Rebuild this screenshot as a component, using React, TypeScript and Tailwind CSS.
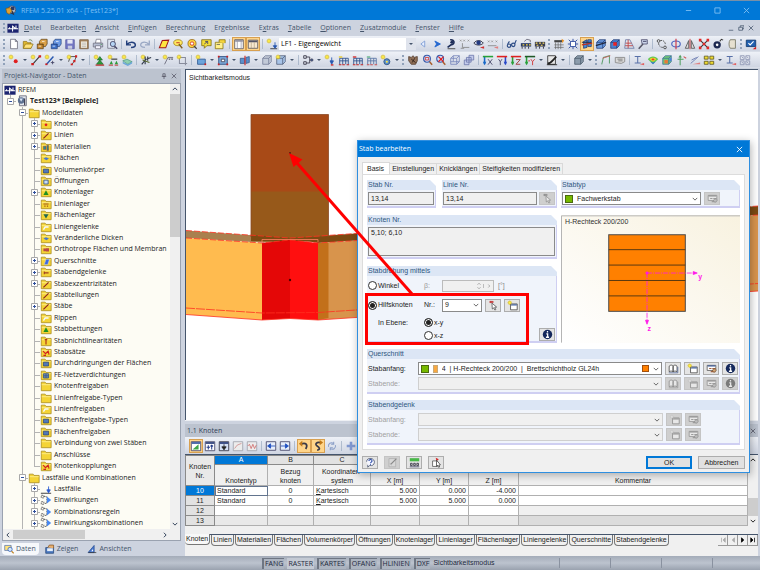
import { useState, type ReactNode } from "react";
import clsx from "clsx";

/* ---------- Icons, all on a 14 x 14 grid ---------- */

const spark = (
  <g>
    <path d="M3.5 0.5v6M0.5 3.5h6M1.5 1.5l4 4M5.5 1.5l-4 4" stroke="#e8c820" strokeWidth="0.8" />
    <circle cx="3.5" cy="3.5" r="1.8" fill="#fff04a" stroke="#b89a10" strokeWidth="0.4" />
  </g>
);

const cube = (fill: string, dark: string) => (
  <g stroke={dark} strokeWidth="0.8">
    <path d="M2 5l3-3h7v7l-3 3H2z" fill={fill} />
    <path d="M2 5h7v7M9 5l3-3" fill="none" />
  </g>
);

const beamFrame = (fill: string) => (
  <g fill="none" stroke="#2c4f8c" strokeWidth="1">
    <path d="M2 12V5h10v7M5.5 5v7M9 5v7M2 8h10" />
    <path d="M1 3.5h4" stroke={fill} strokeWidth="1.5" />
    <path d="M1 12.5h3M5 12.5h3M10 12.5h3" stroke="#c02020" strokeWidth="1.2" />
  </g>
);

const axis = (a: string, b: string, rotate: boolean) => (
  <g fill="none" strokeWidth="1.8">
    <path d={rotate ? "M11 12V3" : "M3 12V3"} stroke={a} />
    <path d="M1 3h12" stroke={b} />
    <path d={rotate ? "M9 9l2 4 2-4" : "M1 9l2 4 2-4"} fill={a} stroke="none" />
  </g>
);

const icons: Record<string, ReactNode> = {
  new: <path d="M3 1.5h5.5L11 4v8.5H3zM8.5 1.5V4H11" fill="#fff" stroke="#667" strokeWidth="0.9" />,
  open: (
    <g stroke="#8a6c10" strokeWidth="0.8">
      <path d="M1.5 12V4h4l1 1.5h4V12z" fill="#e0b830" />
      <path d="M1.5 12l2.5-5h9l-2.5 5z" fill="#ffe27a" />
      <path d="M8 2.5c2-1 3.5 0 4 1.5" fill="none" stroke="#3a6a3a" />
    </g>
  ),
  blockBrown: (
    <g stroke="#5a3a10" strokeWidth="0.8">
      <path d="M1.5 7h7v5.5h-7z" fill="#c88a30" />
      <path d="M4 4l2-2.5h7V7l-2 3H8.5V7H4z" fill="#dba24a" />
      <path d="M3 9.5h3M7 4h3" stroke="#fff" />
    </g>
  ),
  blockBlue: (
    <g stroke="#1c3a78" strokeWidth="0.8">
      <path d="M1.5 7h7v5.5h-7z" fill="#3f74cc" />
      <path d="M4 4l2-2.5h7V7l-2 3H8.5V7H4z" fill="#6c9ae4" />
      <path d="M3 9.5h3M7 4h3" stroke="#fff" />
    </g>
  ),
  save: (
    <g>
      <path d="M2 2h10v10.5H2z" fill="#7478c4" stroke="#50549c" strokeWidth="0.8" />
      <path d="M4 2h6v4.5H4z" fill="#e4e6f4" />
      <path d="M4.5 9h5v3.5h-5z" fill="#c8cce0" />
    </g>
  ),
  paste: (
    <g>
      <path d="M2 2h10v10.5H2z" fill="#a88660" stroke="#6e5436" strokeWidth="0.8" />
      <path d="M3.5 4h7v7.5h-7z" fill="#eee8dc" />
      <path d="M4.5 6h5M4.5 8h5M4.5 10h5" stroke="#a0a0a0" strokeWidth="0.6" />
    </g>
  ),
  print: (
    <g stroke="#667" strokeWidth="0.8">
      <path d="M4 6l1-4.5h5L10.5 6z" fill="#fff" />
      <path d="M1.5 6h11v4.5h-11z" fill="#b8c0d4" />
      <path d="M4 9h6v3.5H4z" fill="#f4f4ff" />
      <path d="M10 7.5h1.5" stroke="#2a8a2a" />
    </g>
  ),
  preview: (
    <g>
      <path d="M2 1.5h8V12H2z" fill="#dfe6f2" stroke="#667" strokeWidth="0.8" />
      <circle cx="8" cy="7" r="3" fill="#b4d4f4" stroke="#446" />
      <path d="M10 9.5l3 3" stroke="#446" strokeWidth="1.6" />
    </g>
  ),
  undo: (
    <path d="M2 3v5h5M2.5 7.5C5 4 11 4 12 7.5c.5 2-1 3.5-5 3.5" fill="none" stroke="#24407c" strokeWidth="1.7" />
  ),
  redo: (
    <path d="M12 3v5H7M11.5 7.5C9 4 3 4 2 7.5c-.5 2 1 3.5 5 3.5" fill="none" stroke="#9aa8c4" strokeWidth="1.5" />
  ),
  plane: <path d="M1.5 11.5L5 3l7.5-.5L9 11.5z" fill="#ffe640" stroke="#a01818" strokeWidth="1.2" />,
  lens: (
    <g>
      <ellipse cx="7" cy="5.5" rx="5" ry="3.5" fill="#ffe860" stroke="#a08010" strokeWidth="0.9" />
      <path d="M8 7l4 5" stroke="#806020" strokeWidth="1.6" />
      <path d="M5 5.5h4" stroke="#c02020" />
    </g>
  ),
  target: (
    <g>
      <circle cx="7" cy="6.5" r="4.7" fill="#ffd840" stroke="#906010" strokeWidth="0.9" />
      <circle cx="7" cy="6.5" r="2" fill="#fff" stroke="#d03020" />
      <path d="M9 9l3.5 3.5" stroke="#444" strokeWidth="1.4" />
    </g>
  ),
  note: (
    <g>
      <path d="M2 2h11v7H8l-3 3V9H2z" fill="#f2dc38" stroke="#7a6a10" strokeWidth="0.9" />
      <path d="M5 7l4-3M6 4h3v3" fill="none" stroke="#446" />
    </g>
  ),
  folderWin: (
    <g stroke="#86700c" strokeWidth="0.9">
      <path d="M1.5 12.5V5h9v7.5z" fill="#fff08a" />
      <path d="M6 5V2h7v4" fill="#f5d53c" />
      <path d="M3 7.5h4" stroke="#555" />
    </g>
  ),
  tableA: (
    <g>
      <path d="M2 2h10v10.5H2z" fill="#fff" stroke="#4a4a5a" strokeWidth="0.9" />
      <path d="M2.5 2.5h9v1.8h-9z" fill="#889" />
      <path d="M5 4v8M9.5 4v8" stroke="#778" strokeWidth="0.7" />
    </g>
  ),
  tableB: (
    <g>
      <path d="M1.5 2.5h11V12h-11z" fill="#f7e8d0" stroke="#4a4a5a" strokeWidth="0.9" />
      <path d="M2 3h10v2H2z" fill="#556" />
      <path d="M5 5v7M8.5 5v7" stroke="#a97" strokeWidth="0.7" />
    </g>
  ),
  loadcase: (
    <g>
      {spark}
      <path d="M5 12.5h8" stroke="#333" />
      <path d="M10.5 5v5M8.5 9l2 3 2-3z" stroke="#2858b0" fill="#2858b0" />
    </g>
  ),
  prev: <path d="M9 3.5L4.500 7 9 10.5z" fill="#e8f0ff" stroke="#7c9cd4" />,
  next: <path d="M4.500 3.5L11 7l-6.500 3.500L6.500 7z" fill="#2468d0" stroke="#2468d0" />,
  eyeSupport: (
    <g>
      <path d="M6 2a4 3 0 1 1 1 6l-4 3" fill="none" stroke="#1c2c58" strokeWidth="1.8" />
      <circle cx="8" cy="5" r="1.8" fill="#1c2c58" />
      <path d="M3 12.5h9" stroke="#555" strokeWidth="1.2" />
    </g>
  ),
  values: (
    <g stroke="#888" fill="none">
      <path d="M1 2l2 2M3 2L1 4M5 2l2 2M7 2L5 4M10 2l2 2M12 2l-2 2" strokeWidth="0.8" />
      <path d="M4 6v5h8M2 12h4" />
    </g>
  ),
  eye: (
    <g>
      <path d="M1 6c3-4 8-4 11 0-3 3-8 3-11 0z" fill="#dfe6f4" stroke="#223" />
      <circle cx="6.5" cy="5.5" r="2.6" fill="#233a80" />
      <path d="M8 11l5-1.500v3z" fill="#d03030" />
    </g>
  ),
  valuesRed: (
    <g stroke="#888" fill="none">
      <path d="M1 3l2 2M3 3L1 5M5 3l2 2M7 3L5 5M10 3l2 2M12 3l-2 2" strokeWidth="0.8" />
      <path d="M1 9h10" />
      <path d="M8 11l5-1.500v3z" fill="#e08080" stroke="none" />
    </g>
  ),
  glasses: (
    <g fill="none" stroke="#2a4a84" strokeWidth="1.3">
      <circle cx="3.5" cy="9" r="2" />
      <circle cx="8.5" cy="8" r="2" />
      <path d="M5 8.5l1.5-.5M10 7l2-4.5M2 7l2-3" />
    </g>
  ),
  beamA: (
    <g>
      <path d="M1 6h12v4H1z" fill="#2a3c68" />
      <path d="M2.5 10v2.5M6 10v2.5M10 10v2.5" stroke="#223" />
      <path d="M3 8h2M7 8h2M10.5 8h2" stroke="#ffd840" strokeWidth="1.4" />
      <path d="M5 4l3-2.5 4 1V5" fill="none" stroke="#667" />
    </g>
  ),
  beamB: (
    <g>
      <path d="M1 4.5h12V10H1z" fill="#3a3e50" />
      <path d="M2.5 10v2.5M6.5 10v2.5M11 10v2.5" stroke="#223" />
      <path d="M2 6h2M6 6h2M10 6h2M3 8.5h2M8 8.5h2" stroke="#ffe060" strokeWidth="1.3" />
    </g>
  ),
  grid: (
    <g>
      <path d="M1.5 2.5h9V5h-9z" fill="#444" />
      <path d="M3 5v8M6 5v8M9 5v8M1.5 8h11M1.5 11h11" stroke="#666" strokeWidth="0.8" />
      <path d="M10 1l3 2-2 3z" fill="#e89020" />
    </g>
  ),
  snap: (
    <g fill="none" stroke="#3450a0" strokeWidth="1.1">
      <path d="M4 4h6v6H4z" fill="#fff" />
      <path d="M7 1v3M7 10v3M1 7h3M10 7h3M2 2l2 2M12 2l-2 2M2 12l2-2M12 12l-2-2" />
    </g>
  ),
  render: (
    <g>
      <path d="M3 4l4-2v9l-4 1zM8 2h4v8H8z" fill="#4888d8" stroke="#16306c" strokeWidth="0.8" />
      <path d="M1 8l12-2" stroke="#c03020" strokeWidth="1.3" />
      <path d="M1 5h11" stroke="#223" />
    </g>
  ),
  cubesBlue: (
    <g>
      {cube("#6c9ce0", "#16306c")}
      <path d="M1 9L13 5" stroke="#202840" strokeWidth="1.5" />
    </g>
  ),
  cubesRed: (
    <g>
      {cube("#4c80d0", "#16306c")}
      <path d="M5 5h4v4H5z" fill="#f02020" />
    </g>
  ),
  redGrid: (
    <g fill="none">
      <path d="M3 2h5l5 10H2z" stroke="#7080a8" />
      <path d="M3 6h7M2.5 9h9M6 2v10" stroke="#c04040" />
    </g>
  ),
  wrench: (
    <g>
      <path d="M5 2h7v5H6z" fill="#ccd6ea" stroke="#446" strokeWidth="0.9" />
      <path d="M2 12.5L7 7" stroke="#556" strokeWidth="1.8" />
      <path d="M7 4h4" stroke="#446" />
    </g>
  ),
  move: (
    <g fill="none" stroke="#444">
      <circle cx="3" cy="3.5" r="1.6" />
      <circle cx="10.5" cy="11" r="1.6" />
      <path d="M5 3c4-1 6 2 6 5M3 6c0 3 2 5 5 5" strokeDasharray="2 1" />
    </g>
  ),
  rotate: (
    <g fill="none" strokeWidth="1.3">
      <ellipse cx="7" cy="7" rx="5" ry="3.5" stroke="#4a64c0" />
      <path d="M7 1v12" stroke="#d03040" />
    </g>
  ),
  mirror: (
    <g fill="none" stroke="#555">
      <path d="M5.5 3v9h-4zM8.5 3v9h4z" fill="#ddd" />
      <path d="M7 1v12" stroke="#c03030" />
    </g>
  ),
  cross: (
    <g>
      <path d="M3 3l8 8M11 3l-8 8" stroke="#303030" strokeWidth="1.2" />
      <path d="M1 1h3v3H1zM10 1h3v3h-3zM1 10h3v3H1zM10 10h3v3h-3zM5.500 5.500h3v3h-3z" fill="#e02828" />
    </g>
  ),
  bomb: (
    <g>
      <circle cx="6" cy="8" r="4.3" fill="#1c2850" />
      <circle cx="6" cy="8" r="1.5" fill="#fff" />
      <path d="M9 4l2-2.5 2 1" fill="none" stroke="#333" strokeWidth="1.2" />
    </g>
  ),
  clipStub: <path d="M5 2h6v10H5c-2-2-2-8 0-10z" fill="#e6e0d0" stroke="#776" />,
  monitor: (
    <g>
      <path d="M1.5 2.5h11V10h-11z" fill="#2060b0" stroke="#123a70" />
      <path d="M4 6l2 2 4-4" fill="none" stroke="#fff" strokeWidth="1.3" />
      <path d="M9 13l4-3v3z" fill="#d02020" />
    </g>
  ),
  node: (
    <g>
      {spark}
      <circle cx="9" cy="8.5" r="2.3" fill="#e02020" />
    </g>
  ),
  line: (
    <g>
      {spark}
      <path d="M3 12l8-9" stroke="#333" strokeWidth="1.2" />
      <path d="M1.5 10.5h3V13h-3zM10 1.5h3V4h-3z" fill="#d02020" />
    </g>
  ),
  member: (
    <g>
      {spark}
      <path d="M3 12l8-9" stroke="#2858b0" strokeWidth="1.6" />
      <path d="M10 8v4M8 10h4" stroke="#446" />
      <path d="M1.5 11H4v2H1.500z" fill="#d02020" />
    </g>
  ),
  poly: (
    <g>
      <path d="M3 9l2-6h7l-2 5-3 4" fill="none" stroke="#444" />
      {spark}
      <path d="M10.5 1.5H13V4h-2.500zM8.5 7H11v2.500H8.500zM5.5 11H8v2H5.500z" fill="#d02020" />
    </g>
  ),
  support: (
    <g>
      {spark}
      <path d="M8 3l3 4H5zM8 7l4 5H4z" fill="#2c9c3c" stroke="#166020" strokeWidth="0.7" />
      <path d="M3 13h10" stroke="#c02020" strokeWidth="1.3" />
    </g>
  ),
  supportLine: (
    <g>
      {spark}
      <path d="M5 6h7" stroke="#333" strokeWidth="1.3" />
      <path d="M3 12l2-4 2 4zM9 12l2-4 2 4z" fill="#2c9c3c" />
      <path d="M2 13h5M9 13h4" stroke="#c02020" />
    </g>
  ),
  supportArea: (
    <g>
      {spark}
      <path d="M2 8l5-2 6 3-5 3z" fill="#8ed0b0" stroke="#3c8c70" strokeWidth="0.7" />
      <path d="M2 9v2l6 3 5-3V9l-5 3z" fill="#6ca8d8" />
    </g>
  ),
  memberEdit: (
    <g>
      {spark}
      <path d="M2 12l5-6 6-2M6 3v9M9 3v5" fill="none" stroke="#303848" strokeWidth="1.3" />
      <path d="M3 7l8 3" stroke="#5a6a30" strokeWidth="1.3" />
    </g>
  ),
  dim: (
    <g>
      {spark}
      <path d="M3 12l4-8h6" fill="none" stroke="#667" />
      <path d="M8 5l1.5 2M9.5 5L8 7M11 5l1.5 2M12.5 5L11 7" stroke="#556" strokeWidth="0.8" />
    </g>
  ),
  crop: (
    <g>
      <path d="M4 2v9h9M2 4h9v9" fill="none" stroke="#888c9c" strokeWidth="1.2" />
      {spark}
    </g>
  ),
  surface: (
    <g>
      <path d="M3 6h9v6H3z" fill="#6ca4dc" stroke="#345c94" />
      {spark}
      <path d="M11 11h2v2h-2z" fill="#d02020" />
    </g>
  ),
  opening: (
    <g>
      <path d="M2 3h10v9H2z" fill="#7ca8d8" stroke="#2c4f80" />
      <path d="M5 6h4v3H5z" fill="#fff" stroke="#445" />
      <path d="M1 2h2v2H1zM11 2h2v2h-2zM1 11h2v2H1zM11 11h2v2h-2z" fill="#d02020" />
    </g>
  ),
  intersect: (
    <g>
      <path d="M1.5 5h5v6h-5zM8 4l4-1v7l-4 1z" fill="#5c90cc" stroke="#2c4f80" strokeWidth="0.8" />
      <path d="M7 2v11" stroke="#d03030" strokeWidth="1.4" />
    </g>
  ),
  solid: cube("#c2cad8", "#66708c"),
  solidNew: (
    <g>
      {cube("#a8c4e8", "#44506c")}
      {spark}
    </g>
  ),
  connect: (
    <g fill="none" stroke="#445" strokeWidth="1.1">
      <path d="M2 2h3v3H2zM2 9h3v3H2zM5 3.5h4v7H5M9 7h2" />
      <circle cx="11.5" cy="7" r="1.3" fill="#3060c0" />
    </g>
  ),
  loadNode: (
    <g>
      {spark}
      <path d="M9 4v4M7 8l2 4 2-4z" fill="#2858b0" stroke="#2858b0" />
      <path d="M8 12h3v1.500H8z" fill="#d02020" />
    </g>
  ),
  frameA: beamFrame("#e8c820"),
  frameB: beamFrame("#d02020"),
  frameD: <g opacity="0.75">{beamFrame("#30a060")}</g>,
  sparkGear: (
    <g>
      {spark}
      <circle cx="8" cy="9" r="3.5" fill="#5c90cc" stroke="#2c4f80" />
      <circle cx="8" cy="9" r="1.2" fill="#ffe640" />
    </g>
  ),
  hand: (
    <g>
      <path d="M2 3l3 1 2-2 1 2 4-1v5l-2 4H5L2 8z" fill="#907058" stroke="#503828" strokeWidth="0.9" />
      <path d="M5 6l5 4M9 5l-3 5" stroke="#302018" />
    </g>
  ),
  zoomWin: (
    <g fill="none">
      <circle cx="7" cy="5.5" r="4" fill="#cfe0fa" stroke="#3858a8" strokeWidth="1.2" />
      <path d="M10 9l3 3.5" stroke="#a86030" strokeWidth="1.8" />
      <path d="M5 4h4v3H5z" stroke="#d03030" />
    </g>
  ),
  zoomAll: (
    <g fill="none">
      <circle cx="6" cy="5.5" r="4" fill="#cfe0fa" stroke="#3858a8" strokeWidth="1.2" />
      <path d="M9 9l3 3.5" stroke="#a86030" strokeWidth="1.8" />
      <path d="M4 3l6 6M10 3L4 9" stroke="#e02020" strokeWidth="1.4" />
    </g>
  ),
  wire: <path d="M2 5l3-3h7v7l-3 3H2zM2 5h7v7M9 5l3-3M5 2v7H2M5 9h7" stroke="#7080b8" strokeWidth="0.9" />,
  boxes: (
    <g fill="#c4ccec" stroke="#6874a8" strokeWidth="0.9">
      <path d="M7 1.5h5.500V7H7zM4 4h5.500v5.500H4zM1.5 7H7v5.500H1.500z" />
    </g>
  ),
  axX: (
    <g>
      {axis("#1868c8", "#28a038", false)}
      <path d="M7 6l5 6.5M12 6l-5 6.5" stroke="#446" />
    </g>
  ),
  axYneg: (
    <g>
      {axis("#2848c8", "#e02020", true)}
      <path d="M3 6l2 3 2-3M5 9v4" stroke="#446" fill="none" />
    </g>
  ),
  axZ: (
    <g>
      {axis("#28a038", "#e02020", false)}
      <path d="M7 6.5h5L7 12h5" stroke="#a03030" fill="none" />
    </g>
  ),
  axYpos: (
    <g>
      {axis("#28a038", "#205828", false)}
      <path d="M5 8h2M8 6l2 3 2.5-3M10 9v4" stroke="#d03030" fill="none" />
    </g>
  ),
  pencil: (
    <g>
      <path d="M2 2h9v10H2z" fill="#e8e8e8" stroke="#333" />
      <path d="M2 11c4 0 5-3 10-8" fill="none" stroke="#222" strokeWidth="2" />
      <path d="M1 12.5h12" stroke="#222" />
    </g>
  ),
  solidDark: cube("#8c9cac", "#3c4c5c"),
  arch: (
    <g fill="none">
      <path d="M2 12l2-8 7-2v9" stroke="#60a070" strokeWidth="1.2" />
      <path d="M3 5l9-3" stroke="#d06060" />
    </g>
  ),
  sheet: (
    <g>
      <path d="M1.5 4h11v5l-4 2-7-1z" fill="#d8d8d8" stroke="#888" />
      <path d="M4 6h6M5 8h5" stroke="#777" />
    </g>
  ),
  deform: (
    <g fill="none">
      <path d="M2 3h7M5.5 3v7M2 10.5h7" stroke="#5870a8" strokeWidth="1.2" />
      <path d="M8 12l5-1.5V13z" fill="#e06060" />
    </g>
  ),
  rainbow: (
    <g>
      <path d="M1 6c3-4 9-4 12 0l-6 6z" fill="#60c850" />
      <path d="M3 6c2-2 6-2 8 0L7 9z" fill="#f0d030" />
      <path d="M5 6c1-1 3-1 4 0L7 8z" fill="#e84020" />
      <path d="M4 9l3 3 3-3-3 1z" fill="#3870e0" />
    </g>
  ),
  fem: (
    <g>
      {cube("#70c878", "#386898")}
      <path d="M4 7h4v4H4z" fill="#e87838" />
      <path d="M10 5l2-1v4l-2 1z" fill="#4880e0" />
    </g>
  ),
  forceUp: (
    <g fill="none" strokeWidth="1.2">
      <path d="M6 13V3M3 6h7" stroke="#50a060" />
      <path d="M10 3l3 2" stroke="#d05050" />
      <path d="M4 4l2-3 2 3z" fill="#50a060" />
    </g>
  ),
  slope: (
    <g fill="none">
      <path d="M2 11l9-8M3 7l6-3" stroke="#6878b0" />
      <path d="M4 12l9-2v2z" fill="#e08080" />
    </g>
  ),
  tiles: (
    <g fill="#f0dc30" stroke="#55501c" strokeWidth="0.9">
      <path d="M1.5 2.5H6V6H1.500zM8 2.5h4.500V6H8zM1.5 8.5H6V12H1.500zM8 8.5h4.500V12H8z" />
    </g>
  ),
  sums: (
    <g fill="none" stroke="#8890b0" strokeWidth="0.9">
      <path d="M1.5 2H6v4.500H1.500zM8 2h4.500v4.500H8zM1.5 8H6v4.500H1.500zM8 8h4.500v4.500H8z" />
      <path d="M3 3l2 2M9 3l2 2M3 9l2 2M9 9l2 2" />
    </g>
  ),
  tblEdit: (
    <g>
      <path d="M1.5 2h11v10.5h-11z" fill="#fff" stroke="#446" />
      <path d="M2 2.5h10v2H2z" fill="#3858a0" />
      <path d="M3 11l7-6v6z" fill="#40a848" />
    </g>
  ),
  tblGo: (
    <g>
      <path d="M1.5 2h11v10.5h-11z" fill="#fff" stroke="#446" />
      <path d="M2 2.5h10v2H2z" fill="#283c78" />
      <path d="M5 6v5M3 8.500h4M9 11V6M7.5 7.500L9 6l1.500 1.500" stroke="#223a88" strokeWidth="1.2" fill="none" />
    </g>
  ),
  tblDown: (
    <g>
      <path d="M1.5 2h11v10.5h-11z" fill="#d4e0f4" stroke="#334" />
      <path d="M2 2.5h10v2H2z" fill="#283c78" />
      <path d="M7 5v3M4.5 8h5L7 11.500z" fill="#222" stroke="#222" />
    </g>
  ),
  chartA: (
    <g fill="none" stroke="#a0a4ac">
      <path d="M1.5 2h11v10.5h-11z" fill="#ececec" />
      <path d="M3 10l3-4 5-2" stroke="#d09090" />
    </g>
  ),
  chartB: (
    <g fill="none" stroke="#a0a4ac">
      <path d="M1.5 2h11v10.5h-11z" fill="#ececec" />
      <path d="M2 7l2-2 2 5 2-5 2 5 2-4" stroke="#d07070" />
    </g>
  ),
  insLeft: (
    <g>
      <path d="M1.5 2h11v10h-11z" fill="#e8eefa" stroke="#446" />
      <path d="M12 7H6M6.5 4.500L3 7l3.500 2.500z" fill="#2050c0" stroke="#2050c0" />
    </g>
  ),
  insRight: (
    <g>
      <path d="M1.5 2h11v10h-11z" fill="#e8eefa" stroke="#446" />
      <path d="M2 7h6M7.5 4.500L11 7 7.500 9.500z" fill="#2050c0" stroke="#2050c0" />
    </g>
  ),
  hookA: (
    <g>
      <path d="M4 4.500c5-2 8 1 5 6" fill="none" stroke="#3a3a48" strokeWidth="2" />
      <path d="M5 1v7L1 4.500z" fill="#c07818" />
    </g>
  ),
  hookB: (
    <g>
      <path d="M10 3C5 2 3 5 6 7s4 4 0 5" fill="none" stroke="#3a3a48" strokeWidth="2" />
      <path d="M9 0v6l4-3z" fill="#c07818" />
    </g>
  ),
  sync: <path d="M3 8c-1-4 3-6 6-4M11 6c1 4-3 6-6 4M9 2v3H6M5 12V9h3" fill="none" stroke="#8ca0c8" strokeWidth="1.2" />,
  plus: <path d="M7 2v10M2 7h10" stroke="#8098d0" strokeWidth="3" />,
  logo: (
    <g>
      <path d="M0.5 2h13v10.500H0.500z" fill="#1c2470" />
      <path d="M1 8h12M3 8V6M6.5 11V4M6.5 5l4 3M10.5 8V4" stroke="#fff" strokeWidth="1.2" fill="none" />
    </g>
  ),
  appLogo: (
    <g>
      <circle cx="8" cy="5.5" r="4.5" fill="#b8c4d4" stroke="#38486c" />
      <path d="M7 2h4v4H7z" fill="#283868" />
      <path d="M1 4l5-1 2 4-3 4-3-2z" fill="#e0a030" stroke="#705010" strokeWidth="0.7" />
      <path d="M9 6l2 6-4-2z" fill="#2c3448" />
    </g>
  ),
  docIcon: (
    <g>
      <path d="M4 1h8v11.500H4z" fill="#e4e8ee" stroke="#667" />
      <circle cx="6" cy="6.5" r="3.8" fill="#5c7090" />
      <path d="M4 4h4L6 8z" fill="#d8e4f4" />
      <path d="M10 4v8" stroke="#445" strokeWidth="1.4" />
    </g>
  ),
  load: (
    <g>
      <path d="M1 12h12" stroke="#555" strokeWidth="1.3" />
      <path d="M10 4v5M8 8l2 3.500L12 8z" fill="#2858d0" stroke="#2858d0" />
    </g>
  ),
  combi: (
    <g fill="none" stroke="#555">
      <path d="M1.5 1.500h3v3h-3zM1.5 9h3v3h-3zM4.5 3H8v8H4.500" strokeDasharray="2 1" />
      <path d="M8 3l5 4-5 4z" fill="#4888f0" stroke="none" />
    </g>
  ),
  tabData: (
    <g>
      <path d="M1 2h9v7H1z" fill="#ffe27a" stroke="#5070b0" />
      <circle cx="8.5" cy="7.5" r="3" fill="#d4e8ff" stroke="#2858b0" />
      <path d="M10.5 10l3 3" stroke="#c08020" strokeWidth="1.6" />
    </g>
  ),
  tabShow: (
    <g>
      <path d="M1 5h11v8H1z" fill="#4a78c0" stroke="#284878" />
      <path d="M3 6h8v4H3z" fill="#e8f0fa" />
      <path d="M4 5l2-3.500h6V6" fill="#e8b070" stroke="#805020" />
    </g>
  ),
  tabViews: (
    <g>
      <path d="M1.5 12L10 2v10z" fill="#4878d0" stroke="#204890" />
      <path d="M2 12h11" stroke="#333" />
      <path d="M6 10l2.500-3v3z" fill="#fff" />
    </g>
  ),
  pick: (
    <g>
      <path d="M2 2.5h5" stroke="#c02828" strokeWidth="1.8" />
      <path d="M3 1v3M5 1v3" stroke="#c02828" strokeWidth="0.8" />
      <path d="M5 4l6 5-2.5.2 1.500 3-1.300.6L7.300 10 5.500 11.500z" fill="#fff" stroke="#444" strokeWidth="0.9" />
    </g>
  ),
  create: (
    <g>
      <path d="M4.5 5H13v7.500H4.500z" fill="#fff" stroke="#444" />
      <path d="M5 5.500h7.500V7H5z" fill="#3c5c9c" />
      {spark}
    </g>
  ),
  edit: (
    <g>
      <path d="M1.5 3h11v6.500h-11z" fill="#fff" stroke="#555" />
      <path d="M2 3h10v1.500H2z" fill="#3c5c9c" />
      <path d="M4 7h3M8 7h4M6 11h6" stroke="#a06040" strokeWidth="1.5" />
      <path d="M8 9l4-2 1 3-3 2z" fill="#d8a878" stroke="#604020" strokeWidth="0.7" />
    </g>
  ),
  book: (
    <g stroke="#333" strokeWidth="0.9">
      <path d="M1.5 11V4c2-2 4-1.500 5 0v7c-2-1-3-1-5 0zM6.5 4c1-1.500 3-2 5 0v7c-2-1-3-1-5 0z" fill="#fff" />
      <path d="M1 12.5h11.500V5" fill="none" stroke="#445a94" />
    </g>
  ),
  info: (
    <g>
      <circle cx="7" cy="7" r="6" fill="#14285c" />
      <path d="M7 2.500v2M5.5 6.200H7.200V10.500M5 10.500h4" stroke="#fff" strokeWidth="1.6" fill="none" />
    </g>
  ),
  help: (
    <g fill="none">
      <path d="M2 6a5 4.500 0 1 1 4 4.800L3.500 13V10" fill="#f4f6ff" stroke="#44506c" />
      <path d="M5 5c0-2.500 4-2.500 4 0 0 1.500-2 1.500-2 3M7 9v1" stroke="#2848a8" strokeWidth="1.3" />
    </g>
  ),
  comment: (
    <g>
      <path d="M2.5 2H11v10.500H2.500z" fill="#dde4dd" stroke="#8a928a" />
      <path d="M5 9l7-7" stroke="#444" strokeWidth="1.6" />
      <path d="M4 8l1.500 2.500" stroke="#5a8a5a" />
    </g>
  ),
  units: (
    <g>
      <path d="M1 1.500h12v4H1z" fill="#48b848" />
      <path d="M2 8h2v3H2zM6 8h2v3H6zM10 8h2v3h-2z" fill="none" stroke="#223" />
      <path d="M1 12.500h12" stroke="#446" />
    </g>
  ),
  select: (
    <g>
      <path d="M2 5h6v7H2z" fill="#fff" stroke="#555" />
      <path d="M6 1l4 2-3 2z" fill="#d02828" />
      <path d="M7 4l5 6-2 .2 1 2.500-1.500.3-1-2.500L7 12z" fill="#fff" stroke="#333" strokeWidth="0.9" />
    </g>
  ),
};

function Icon({ name, className = "size-3.5" }: { name: string; className?: string }) {
  return (
    <svg viewBox="0 0 14 14" className={clsx("shrink-0", className)} fill="none" aria-hidden="true">
      {icons[name]}
    </svg>
  );
}

const marks: Record<string, ReactNode> = {
  node: <circle cx="7" cy="8" r="1.6" fill="#e02020" />,
  line: <path d="M4 11l6-6" stroke="#8c2020" strokeWidth="1.3" />,
  mat: <path d="M4 6h3v4H4zM8 5h2v6H8z" fill="#2c8c8c" stroke="#a03030" strokeWidth="0.5" />,
  blue: <path d="M4 7.5L7 6l3.5 1.5-3 2z" fill="#4878d0" />,
  solid: <path d="M4 6h6v4.500H4z" fill="#5078b8" stroke="#2c4070" strokeWidth="0.8" />,
  hole: <path d="M4.5 6h5v4.500h-5z" fill="#c8dcf4" stroke="#38588c" />,
  green: <path d="M7 5l3 5.500H4z" fill="#209020" />,
  rail: <path d="M4 7h6M5 9.5h1.500M8 9.5h1.500" stroke="#a05818" strokeWidth="1.3" />,
  area: <path d="M4 6h6l-3 5z" fill="#206850" />,
  pale: <path d="M4 10l2-3h4" stroke="#f4f8ff" strokeWidth="1.6" fill="none" />,
  ortho: <path d="M4 6.500h3v3H4zM7 6h3.500v4H7z" fill="#b84848" />,
  section: <path d="M5 11l2-6h4l-2 6z" fill="#3c68e0" stroke="#c8d8ff" strokeWidth="0.5" />,
  hinge: <path d="M5 8h5M5 6.500v3" stroke="#a04020" strokeWidth="1.3" />,
  bar: <path d="M7 5v6M5.5 5.500h3" stroke="#b03818" strokeWidth="1.4" />,
  mesh: <path d="M4 5.500h6v5H4zM6 5.500v5M8 5.500v5M4 8h6" stroke="#30507c" strokeWidth="0.9" fill="#8ca8cc" />,
  chain: <path d="M3.5 6l3 3 3-3 1 4M4 11h3" stroke="#d02020" strokeWidth="1.3" fill="none" />,
};

function Folder({ mark }: { mark?: string }) {
  return (
    <svg viewBox="0 0 14 14" className="size-3 shrink-0" fill="none" aria-hidden="true">
      <path d="M1.5 12.500V2.500H6L7 4h6v8.500z" fill="#f4d436" stroke="#a88a1c" strokeWidth="0.9" />
      <path d="M2 5.500h10.500" stroke="#fff29a" strokeWidth="0.9" />
      {mark && marks[mark]}
    </svg>
  );
}

/* ---------- Menu and toolbars ---------- */

// [before, mnemonic, after]
const menu = [
  ["", "D", "atei"],
  ["Bearbeite", "n", ""],
  ["", "A", "nsicht"],
  ["", "E", "infügen"],
  ["Be", "r", "echnung"],
  ["Er", "g", "ebnisse"],
  ["E", "x", "tras"],
  ["", "T", "abelle"],
  ["", "O", "ptionen"],
  ["", "Z", "usatzmodule"],
  ["", "F", "enster"],
  ["", "H", "ilfe"],
];

// "|" separator, ":" grip, "v" drop-down arrow, leading "*" pressed
const barFileLeft =
  ": new open blockBrown blockBlue save paste print preview | undo redo | plane lens target note folderWin | *tableA *tableB | loadcase";
const barFileRight =
  "prev next eyeSupport values eye valuesRed | glasses beamA beamB : grid snap *render cubesBlue cubesRed redGrid wrench | move rotate mirror cross bomb clipStub : monitor";
const barModel =
  ": node v line member v poly v | support supportLine supportArea | memberEdit v dim crop | surface v opening v intersect v solid solidNew v | connect v loadNode frameA frameB frameD sparkGear v : hand zoomWin zoomAll wire boxes | axX axYneg axZ axYpos v pencil v | solidDark v : arch sheet | deform rainbow fem forceUp slope tiles v deform sums";
const barTable = "*tblEdit tblGo tblDown chartA chartB | insLeft insRight | *hookA *hookB sync | plus hookA sync";

function ToolItems({ items }: { items: string }) {
  return (
    <>
      {items.split(" ").map((item, i) => {
        if (item === "|") return <span key={i} className="mx-0.5 h-2.5 w-px shrink-0 bg-slate-400/60" />;
        if (item === ":")
          return <span key={i} className="mx-px h-2.5 w-[3px] shrink-0 border-l-2 border-dotted border-slate-400" />;
        if (item === "v")
          return (
            <button key={i} aria-label="Mehr" className="flex w-2 shrink-0 justify-center">
              <span className="border-x-2 border-t-2 border-x-transparent border-t-slate-600" />
            </button>
          );
        const pressed = item.startsWith("*");
        const name = pressed ? item.slice(1) : item;
        return (
          <button
            key={i}
            aria-label={name}
            className={clsx(
              "flex size-3.5 shrink-0 items-center justify-center",
              pressed && "bg-[#ffd58a] outline outline-[#d8a050] -outline-offset-1"
            )}
          >
            <Icon name={name} className="size-3" />
          </button>
        );
      })}
    </>
  );
}

const barClass =
  "flex h-4 shrink-0 items-center overflow-hidden bg-linear-to-b from-[#eef1f7] to-[#cfd5e2] pl-0.5 border-b border-[#d9dee8]";

/* ---------- Navigator ---------- */

type Node = { label: string; depth: number; box?: "+" | "-"; icon?: string; mark?: string; last?: boolean };

const leaf = (label: string, mark?: string, box?: "+"): Node => ({ label, depth: 2, mark, box });

const rows: Node[] = [
  { label: "RFEM", depth: -1, icon: "logo" },
  { label: "Test123* [Beispiele]", depth: 0, box: "-", icon: "docIcon", last: true },
  { label: "Modelldaten", depth: 1, box: "-" },
  leaf("Knoten", "node", "+"),
  leaf("Linien", "line", "+"),
  leaf("Materialien", "mat", "+"),
  leaf("Flächen", "blue"),
  leaf("Volumenkörper", "solid"),
  leaf("Öffnungen", "hole"),
  leaf("Knotenlager", "green", "+"),
  leaf("Linienlager", "rail"),
  leaf("Flächenlager", "area"),
  leaf("Liniengelenke", "pale"),
  leaf("Veränderliche Dicken", "blue"),
  leaf("Orthotrope Flächen und Membran", "ortho"),
  leaf("Querschnitte", "section", "+"),
  leaf("Stabendgelenke", "hinge", "+"),
  leaf("Stabexzentrizitäten", "line", "+"),
  leaf("Stabteilungen", "line"),
  leaf("Stäbe", "line", "+"),
  leaf("Rippen", "pale"),
  leaf("Stabbettungen", "green"),
  leaf("Stabnichtlinearitäten", "bar"),
  leaf("Stabsätze", "chain"),
  leaf("Durchdringungen der Flächen", "solid"),
  leaf("FE-Netzverdichtungen", "mesh"),
  leaf("Knotenfreigaben"),
  leaf("Linienfreigabe-Typen"),
  leaf("Linienfreigaben", "pale"),
  leaf("Flächenfreigabe-Typen", "solid"),
  leaf("Flächenfreigaben", "solid"),
  leaf("Verbindung von zwei Stäben"),
  leaf("Anschlüsse"),
  { label: "Knotenkopplungen", depth: 2, mark: "chain", last: true },
  { label: "Lastfälle und Kombinationen", depth: 1, box: "-" },
  { label: "Lastfälle", depth: 2, box: "+", icon: "load" },
  { label: "Einwirkungen", depth: 2, box: "+", icon: "combi" },
  { label: "Kombinationsregeln", depth: 2, box: "+", icon: "combi" },
  { label: "Einwirkungskombinationen", depth: 2, box: "+", icon: "combi" },
];

function TreeRow({ node }: { node: Node }) {
  return (
    <li className="flex min-h-0 flex-1 items-center whitespace-nowrap">
      {node.depth > 0 && <span className="w-3 shrink-0" />}
      {node.depth > 1 && (
        <span className="flex w-3 shrink-0 justify-center self-stretch">
          <span className="border-l border-[#b4b4b4]" />
        </span>
      )}
      {node.depth >= 0 && (
        <span className="relative flex w-3 shrink-0 items-center justify-center self-stretch">
          <span className={clsx("absolute left-1.5 top-0 border-l border-[#b4b4b4]", node.last ? "h-1/2" : "h-full")} />
          <span className="absolute left-1.5 right-0 top-1/2 border-t border-[#b4b4b4]" />
          {node.box && (
            <svg viewBox="0 0 7 7" className="relative size-[7px]" aria-hidden="true">
              <path d="M0.5 0.5h6v6h-6z" fill="#fff" stroke="#a8a8a8" />
              <path d={node.box === "+" ? "M2 3.5h3M3.5 2v3" : "M2 3.5h3"} stroke="#30509c" />
            </svg>
          )}
        </span>
      )}
      {node.icon ? <Icon name={node.icon} className="size-3" /> : <Folder mark={node.mark} />}
      <span className={clsx("pl-0.5", node.depth === 0 && "font-bold")}>{node.label}</span>
    </li>
  );
}

function Chevron({ className = "size-1.5" }: { className?: string }) {
  return (
    <svg viewBox="0 0 8 8" className={clsx("shrink-0", className)} fill="none" aria-hidden="true">
      <path d="M1 2.5l3 3 3-3" stroke="currentColor" strokeWidth="1.3" />
    </svg>
  );
}

function Navigator() {
  return (
    <aside className="flex w-[181px] shrink-0 flex-col pl-0.5">
      <header className="flex h-3.5 shrink-0 items-center bg-[#bcc3cf] px-0.5 text-slate-600">
        <h2 className="flex-1">Projekt-Navigator - Daten</h2>
        <button aria-label="Anheften" className="w-2.5">
          <svg viewBox="0 0 8 8" className="size-1.5" fill="none">
            <path d="M2.5 1h3v3.500h-3zM1 4.500h6M4 4.500V8" stroke="#556" />
          </svg>
        </button>
        <button aria-label="Schließen" className="w-2">
          <svg viewBox="0 0 8 8" className="size-1.5">
            <path d="M1 1l6 6M7 1L1 7" stroke="#556" />
          </svg>
        </button>
      </header>
      <div className="flex min-h-0 flex-1 flex-col border border-[#9aa2b0] bg-[#fdfcf4]">
        <div className="flex min-h-0 flex-1">
          <ul className="flex min-w-0 flex-1 flex-col overflow-hidden pl-px">
            {rows.map((node, i) => (
              <TreeRow key={i} node={node} />
            ))}
          </ul>
          <div className="flex w-2.5 shrink-0 flex-col items-center bg-[#f0f0f0] text-slate-700">
            <Chevron className="my-0.5 size-1.5 rotate-180" />
            <div className="h-[143px] w-full bg-[#cdcdcd]" />
            <Chevron className="mt-auto mb-0.5 size-1.5" />
          </div>
        </div>
        <div className="flex h-[11px] shrink-0 items-center bg-[#f0f0f0] pr-3 text-slate-700">
          <Chevron className="mx-0.5 size-1.5 rotate-90" />
          <div className="h-[9px] w-[72px] bg-[#cdcdcd]" />
          <Chevron className="ml-auto size-1.5 -rotate-90" />
        </div>
      </div>
      <div className="flex h-[15px] shrink-0 items-center text-slate-600">
        {[
          ["tabData", "Daten"],
          ["tabShow", "Zeigen"],
          ["tabViews", "Ansichten"],
        ].map(([icon, label], i) => (
          <button
            key={label}
            className={clsx("mr-1 flex h-3 items-center gap-0.5 pl-0.5 pr-[3px]", i === 0 && "rounded-b-sm bg-[#f6f8fb]")}
          >
            <Icon name={icon} className="size-2.5" />
            {label}
          </button>
        ))}
      </div>
    </aside>
  );
}

/* ---------- Model view ---------- */

function ModelView() {
  return (
    <div className="relative min-h-0 flex-1 overflow-hidden border-l border-t border-slate-600 bg-white">
      <svg viewBox="185 70 572 352" preserveAspectRatio="xMinYMin slice" className="size-full" fill="none">
        {/* left beam */}
        <path d="M185 230.500L289 238v4.500H261L185 238z" fill="#a9804f" />
        <path d="M185 238l76 5v77l-76-5.500z" fill="#ffbb4f" />
        {/* right beam */}
        <path d="M289 238l468-32v9l-440 28z" fill="#7c4a12" />
        <path d="M317 243l440-28v76l-440 29z" fill="#d8944c" />
        {/* column */}
        <path d="M250 114.500h77.500V192H250z" fill="#a84a17" />
        <path d="M250 191.500h77.500V237L289 240l-39-4z" fill="#97591a" />
        <path d="M250 235l39 3 38.500-2v5l-38.500 1-39-1z" fill="#7c4a12" />
        <path d="M317 243l10.500-.5V318L317 320z" fill="#c2701a" />
        <path d="M250 237V114.500h77.500V236" stroke="#8c4a26" strokeWidth="0.8" />
        {/* selected joint */}
        <path d="M261 243l28-3v78.500L261 320z" fill="#e40707" />
        <path d="M289 240l28 3v77l-28-1.500z" fill="#ff0f0f" />
        <g stroke="#ff3020" strokeWidth="0.8">
          <path d="M185 230.500l104 7.500 468-32M185 238l76 5 28-3 28 3 440-28" strokeDasharray="6 2" />
          <path d="M185 308l76 5 56-.5 440-29" strokeDasharray="9 1" />
          <path d="M185 314.500l76 5.500 28-1.500 28 1.500 440-29" />
          <path d="M261 242v-2.500h56v2.500" stroke="#ff8060" />
        </g>
        <circle cx="289" cy="153" r="1" fill="#502010" />
        <circle cx="289" cy="280" r="1.2" fill="#500000" />
      </svg>
      <p className="absolute left-[3px] top-[3px] font-['Liberation_Sans',sans-serif]">Sichtbarkeitsmodus</p>
    </div>
  );
}

/* ---------- Table panel ---------- */

const sheetTabs = [
  "Knoten",
  "Linien",
  "Materialien",
  "Flächen",
  "Volumenkörper",
  "Öffnungen",
  "Knotenlager",
  "Linienlager",
  "Flächenlager",
  "Liniengelenke",
  "Querschnitte",
  "Stabendgelenke",
];

const data = [
  ["10", "Standard", "0", "Kartesisch", "5.000", "0.000", "-4.000"],
  ["11", "Standard", "0", "Kartesisch", "5.000", "5.000", "0.000"],
  ["12", "", "", "", "", "", ""],
  ["13", "", "", "", "", "", ""],
];

const headCells = [
  ["A", "", "Knotentyp"],
  ["B", "Bezug", "knoten"],
  ["C", "Koordinaten-", "system"],
  ["D", "", "X [m]"],
  ["E", "", "Y [m]"],
  ["F", "", "Z [m]"],
  ["G", "", "Kommentar"],
];

const cell = "border border-[#b0b0b0] p-0";

function TablePanel() {
  const [tab, setTab] = useState(0);
  return (
    <section className="flex shrink-0 flex-col bg-[#f0f0f0] font-['Liberation_Sans',sans-serif]">
      <header className="flex h-[13px] items-center bg-[#bcc3cf] px-0.5 font-['Open_Sans',sans-serif] text-slate-700">
        <h2 className="flex-1">1.1 Knoten</h2>
        <button aria-label="Tabelle schließen">
          <svg viewBox="0 0 8 8" className="size-1.5">
            <path d="M1 1l6 6M7 1L1 7" stroke="#556" />
          </svg>
        </button>
      </header>
      <div className="flex h-[17px] items-center bg-linear-to-b from-[#eef1f7] to-[#cfd5e2] pl-1">
        <ToolItems items={barTable} />
      </div>
      <div className="flex border-t border-slate-600">
        <table className="flex-1 table-fixed border-collapse text-center leading-[9px]">
          <colgroup>
            <col className="w-[29px]" />
            <col className="w-[53px]" />
            <col className="w-[46px]" />
            <col className="w-[57px]" />
            <col className="w-[49px]" />
            <col className="w-[49px]" />
            <col className="w-[50px]" />
            <col />
          </colgroup>
          <thead>
            <tr className="h-[9px]">
              <th rowSpan={2} className="border border-[#8a8a8a] bg-[#e9e9e9] p-0 font-normal">
                Knoten
                <br />
                Nr.
              </th>
              {headCells.map(([letter]) => (
                <th
                  key={letter}
                  className={clsx(
                    "border border-[#8a8a8a] p-0 font-normal leading-2",
                    letter === "A" ? "bg-[#0078d7] text-white" : "bg-[#e2e2e2]"
                  )}
                >
                  {letter}
                </th>
              ))}
            </tr>
            <tr className="h-[21px]">
              {headCells.map(([letter, top, bottom]) => (
                <th key={letter} className={clsx(cell, "overflow-hidden bg-[#f0f0f0] align-bottom font-normal")}>
                  {top && <div className="whitespace-nowrap">{top}</div>}
                  <div>{bottom}</div>
                </th>
              ))}
            </tr>
          </thead>
          <tbody>
            {data.map(([nr, type, ref, system, x, y, z], i) => (
              <tr key={nr} className={clsx("h-2.5", i === 3 ? "bg-[#e9e9e9]" : "bg-white")}>
                <th
                  className={clsx(
                    "border border-[#8a8a8a] p-0 font-normal",
                    i === 0 ? "bg-[#0078d7] text-white" : "bg-[#e2e2e2]"
                  )}
                >
                  {nr}
                </th>
                <td className={clsx(cell, "pl-0.5 text-left", i === 0 && "outline outline-slate-500 -outline-offset-1")}>
                  {type}
                </td>
                <td className={cell}>{ref}</td>
                <td className={clsx(cell, "pl-0.5 text-left")}>
                  <u>{system.slice(0, 1)}</u>
                  {system.slice(1)}
                </td>
                <td className={clsx(cell, "pr-0.5 text-right")}>{x}</td>
                <td className={clsx(cell, "pr-0.5 text-right")}>{y}</td>
                <td className={clsx(cell, "pr-0.5 text-right")}>{z}</td>
                <td className={clsx(cell, i === 2 && "bg-[#f0f0f0]", i === 3 && "bg-[#dcdcdc]")} />
              </tr>
            ))}
          </tbody>
        </table>
        <div className="flex w-2.5 flex-col items-center bg-[#f0f0f0]">
          <Chevron className="mt-0.5 size-1.5 rotate-180" />
          <div className="mt-auto h-[18px] w-full bg-[#cdcdcd]" />
          <Chevron className="my-0.5 size-1.5" />
        </div>
      </div>
      <div className="mt-2 flex h-[22px] items-start border-t border-slate-600">
        {sheetTabs.map((label, i) => (
          <button
            key={label}
            onClick={() => setTab(i)}
            className={clsx(
              "mr-px h-[11px] whitespace-nowrap rounded-b-sm border border-t-0 border-[#777] px-px leading-2.5",
              tab === i && "-mt-px border-l-0 bg-[#f8f8f8]"
            )}
          >
            {label}
          </button>
        ))}
        <div className="ml-auto flex h-[11px]">
          {["M7 1v6L4 4zM2 1v6", "M6 1v6L3 4z", "M2 1v6l3-3z", "M1 1v6l3-3zM6 1v6"].map((d, i) => (
            <button
              key={d}
              aria-label={`Register ${i + 1}`}
              className="flex w-2.5 items-center justify-center border-b border-r border-[#999]"
            >
              <svg viewBox="0 0 8 8" className="size-1.5">
                <path d={d} fill={i < 2 ? "#aaa" : "#000"} stroke={i < 2 ? "#aaa" : "#000"} />
              </svg>
            </button>
          ))}
        </div>
      </div>
    </section>
  );
}

/* ---------- Dialog ---------- */

function Group({ title, className, children }: { title: string; className?: string; children: ReactNode }) {
  return (
    <fieldset className={clsx("min-w-0", className)}>
      <legend className="float-left h-2.5 w-full bg-[#dce6f5] pl-px leading-2.5 text-[#2f567f] [clip-path:polygon(0_0,calc(100%-6px)_0,100%_6px,100%_100%,0_100%)]">
        {title}
      </legend>
      <div className="clear-left border-b-2 border-r border-[#cfcff2] bg-[#f0f4fb] px-px pt-0.5 pb-px">{children}</div>
    </fieldset>
  );
}

function IconButton({ name, label, disabled }: { name: string; label: string; disabled?: boolean }) {
  return (
    <button
      aria-label={label}
      disabled={disabled}
      className={clsx(
        "flex h-[13px] w-4 shrink-0 items-center justify-center border",
        disabled ? "border-[#c4c4c4] bg-[#cfcfcf]" : "border-[#adadad] bg-[#e4e4e4]"
      )}
    >
      <Icon name={name} className={clsx("size-[11px]", disabled && "opacity-50 grayscale")} />
    </button>
  );
}

function Combo({
  label,
  value,
  disabled,
  className,
  before,
  after,
}: {
  label: string;
  value: string;
  disabled?: boolean;
  className?: string;
  before?: ReactNode;
  after?: ReactNode;
}) {
  return (
    <div
      className={clsx(
        "flex h-[13px] items-center gap-1 border px-0.5",
        disabled ? "border-[#cfcfcf] bg-[#f0f0f0] text-[#a0a0a0]" : "border-[#8a8a8a] bg-white",
        className
      )}
    >
      {before}
      <select
        aria-label={label}
        disabled={disabled}
        className="min-w-0 flex-1 appearance-none bg-transparent leading-[10px] outline-none"
      >
        <option>{value}</option>
      </select>
      {after}
      <Chevron className="size-1.5 text-[#666]" />
    </div>
  );
}

const fieldClass = "border border-[#8a8a8a] bg-[#f0f0f0] px-0.5 leading-[10px] outline-none resize-none";

const greenSwatch = <span className="size-2 shrink-0 border border-[#4a6a10] bg-[#76b900]" />;

function SectionPreview() {
  return (
    <svg viewBox="0 0 180 128" className="h-32 w-full bg-linear-to-bl from-[#f8f2e0] to-white" fill="none">
      <path d="M0.5 128V0.500H180" stroke="#b4b4b4" />
      <rect x="48" y="19.5" width="77" height="77" fill="#ff8000" stroke="#4a4a4a" />
      <path d="M48 34.500h77M48 50h77M48 65.500h77M48 81h77" stroke="#5a3810" />
      <g stroke="#ff18e8" strokeWidth="0.8">
        <path d="M86.5 58H135M86.5 58v49" strokeDasharray="5 1 1 1" />
        <path d="M133 56.500l4 1.500-4 1.500zM85 105.500l1.500 4 1.500-4zM85.500 57h2v2h-2z" fill="#ff18e8" />
      </g>
      <text x="138" y="64" className="fill-[#ff18e8] text-[7px] font-bold">
        y
      </text>
      <text x="87" y="116" className="fill-[#ff18e8] text-[7px] font-bold">
        z
      </text>
      <text x="4" y="9" className="fill-[#303030] text-[7px]">
        H-Rechteck 200/200
      </text>
    </svg>
  );
}

function Radio({
  name,
  label,
  checked,
  onChange,
}: {
  name: string;
  label: string;
  checked: boolean;
  onChange: () => void;
}) {
  return (
    <label className="flex items-center gap-px">
      <input
        type="radio"
        name={name}
        checked={checked}
        onChange={onChange}
        className="size-[9px] shrink-0 appearance-none rounded-full border border-[#333] bg-white checked:bg-[#222] checked:shadow-[inset_0_0_0_1px_white]"
      />
      {label}
    </label>
  );
}

function EditMemberDialog() {
  const [rotation, setRotation] = useState("node");
  const [plane, setPlane] = useState("xy");
  return (
    <div
      role="dialog"
      aria-label="Stab bearbeiten"
      className="absolute left-[357px] top-[140px] w-[393px] border border-[#2f8fe0] bg-[#f0f0f0] font-['Liberation_Sans',sans-serif] text-[#1c1c1c] shadow-[1px_2px_8px_rgba(0,0,0,0.3)]"
    >
      <header className="flex h-4 items-center bg-[#0078d7] pl-px pr-1.5 font-['Open_Sans',sans-serif] text-white">
        <h2 className="flex-1">Stab bearbeiten</h2>
        <button aria-label="Schließen">
          <svg viewBox="0 0 8 8" className="size-[7px]">
            <path d="M1 1l6 6M7 1L1 7" stroke="#fff" />
          </svg>
        </button>
      </header>
      <div className="px-1 pt-[5px]">
        <div className="flex items-end">
          {["Basis", "Einstellungen", "Knicklängen", "Steifigkeiten modifizieren"].map((label, i) => (
            <button
              key={label}
              className={clsx(
                "border border-b-0 border-[#d9d9d9]",
                i === 0 ? "h-3 bg-white pl-1 pr-[5px]" : "h-[11px] border-l-0 px-0.5"
              )}
            >
              {label}
            </button>
          ))}
        </div>
        <div className="flex flex-col gap-1.5 border border-[#dcdcdc] bg-white px-1 pt-[5px] pb-1">
          <div className="grid grid-cols-[190px_1fr] gap-x-1">
            <div className="flex flex-col gap-[7px]">
              <div className="flex gap-1.5">
                <Group title="Stab Nr." className="w-[69px]">
                  <input aria-label="Stab Nr." readOnly defaultValue="13,14" className={clsx(fieldClass, "block h-[13px] w-[66px]")} />
                </Group>
                <Group title="Linie Nr." className="flex-1">
                  <div className="flex gap-0.5">
                    <input aria-label="Linie Nr." readOnly defaultValue="13,14" className={clsx(fieldClass, "h-[13px] w-[94px]")} />
                    <IconButton name="pick" label="Linie wählen" disabled />
                  </div>
                </Group>
              </div>
              <Group title="Knoten Nr.">
                <textarea aria-label="Knoten Nr." readOnly defaultValue="5,10; 6,10" className={clsx(fieldClass, "block h-[29px] w-full")} />
              </Group>
              <Group title="Stabdrehung mittels">
                <div className="grid h-[62px] grid-cols-[56px_18px_1fr] grid-rows-[15px_24px_11px_12px] items-center">
                  <Radio name="rotation" label="Winkel" checked={rotation === "angle"} onChange={() => setRotation("angle")} />
                  <label htmlFor="beta" className="text-[#999]">
                    β:
                  </label>
                  <div className="flex items-center gap-1 text-[#888]">
                    <div className="flex h-3 w-[52px] items-center border border-[#bbb] bg-[#f0f0f0]">
                      <input id="beta" disabled className="h-2.5 min-w-0 flex-1" />
                      <span className="flex w-2 flex-col items-center">
                        <Chevron className="size-1 rotate-180" />
                        <Chevron className="size-1" />
                      </span>
                      <span className="flex w-2.5 justify-center border-l border-[#bbb]">
                        <Chevron className="size-1 -rotate-90" />
                      </span>
                    </div>
                    [°]
                  </div>
                  <Radio name="rotation" label="Hilfsknoten" checked={rotation === "node"} onChange={() => setRotation("node")} />
                  <span>Nr.:</span>
                  <div className="flex items-center gap-[3px]">
                    <Combo label="Hilfsknoten Nr." value="9" className="w-10" />
                    <IconButton name="pick" label="Knoten wählen" />
                    <IconButton name="create" label="Neuer Knoten" />
                  </div>
                  <span className="pl-2.5">In Ebene:</span>
                  <span className="col-span-2">
                    <Radio name="plane" label="x-y" checked={plane === "xy"} onChange={() => setPlane("xy")} />
                  </span>
                  <span />
                  <div className="col-span-2 flex items-end justify-between">
                    <Radio name="plane" label="x-z" checked={plane === "xz"} onChange={() => setPlane("xz")} />
                    <IconButton name="info" label="Info" />
                  </div>
                </div>
              </Group>
            </div>
            <div className="flex flex-col gap-[7px]">
              <Group title="Stabtyp">
                <div className="flex gap-[3px]">
                  <Combo label="Stabtyp" value="Fachwerkstab" className="w-[139px]" before={greenSwatch} />
                  <IconButton name="edit" label="Stabtyp bearbeiten" disabled />
                </div>
              </Group>
              <SectionPreview />
            </div>
          </div>
          <Group title="Querschnitt">
            {["Stabanfang:", "Stabende:"].map((label, i) => (
              <div key={label} className="flex h-[15px] items-center gap-[3px]">
                <span className={clsx("w-[47px]", i === 1 && "text-[#a0a0a0]")}>{label}</span>
                <Combo
                  label={`Querschnitt ${label}`}
                  value={i === 0 ? "4\u00a0\u00a0|\u00a0H-Rechteck 200/200\u00a0\u00a0|\u00a0\u00a0Brettschichtholz GL24h" : ""}
                  disabled={i === 1}
                  className="w-[245px]"
                  before={
                    i === 0 && (
                      <>
                        {greenSwatch}
                        <span className="h-2 w-[5px] shrink-0 border border-[#c8a878] bg-[#f8a840]" />
                      </>
                    )
                  }
                  after={i === 0 && <span className="size-[7px] shrink-0 border border-[#a05010] bg-[#ff8000]" />}
                />
                <IconButton name="book" label="Bibliothek" disabled={i === 1} />
                <IconButton name="create" label="Neu" disabled={i === 1} />
                <IconButton name="edit" label="Bearbeiten" disabled={i === 1} />
                <IconButton name="info" label="Info" disabled={i === 1} />
              </div>
            ))}
          </Group>
          <Group title="Stabendgelenk">
            {["Stabanfang:", "Stabende:"].map((label) => (
              <div key={label} className="flex h-[15px] items-center gap-[3px]">
                <span className="w-[47px] text-[#a0a0a0]">{label}</span>
                <Combo label={`Gelenk ${label}`} value="" disabled className="w-[245px]" />
                <IconButton name="create" label="Neu" disabled />
                <IconButton name="edit" label="Bearbeiten" disabled />
              </div>
            ))}
          </Group>
        </div>
      </div>
      <footer className="flex items-center gap-1.5 px-1 pt-1.5 pb-[3px]">
        <IconButton name="help" label="Hilfe" />
        <IconButton name="comment" label="Kommentar" disabled />
        <IconButton name="units" label="Einheiten" />
        <IconButton name="select" label="Auswahl" />
        <button className="ml-auto h-[13px] w-[46px] border-2 border-[#0078d7] bg-[#e1e1e1] leading-[9px]">OK</button>
        <button className="h-[13px] w-[47px] border border-[#adadad] bg-[#e1e1e1] leading-[11px]">Abbrechen</button>
      </footer>
    </div>
  );
}

/* ---------- Status bar ---------- */

const modes = ["FANG", "RASTER", "KARTES", "OFANG", "HLINIEN", "DXF"];

function StatusBar() {
  return (
    <footer className="flex h-3.5 shrink-0 items-center gap-[3px] bg-linear-to-b from-[#a4acb9] via-[#bcc3ce] to-[#9aa2af] pl-[262px] text-slate-800">
      {modes.map((mode) => (
        <button
          key={mode}
          className={clsx(
            "h-[11px] px-px leading-[9px]",
            mode === "RASTER" ? "bg-[#c4cad4]" : "border-l-2 border-t border-[#6e7683] bg-[#acb4c0]"
          )}
        >
          {mode}
        </button>
      ))}
      <span className="flex-1 font-['Liberation_Sans',sans-serif]">Sichtbarkeitsmodus</span>
      {[0, 1, 2, 3].map((n) => (
        <span key={n} className="h-2.5 w-12 border-l border-[#8a92a0]" />
      ))}
    </footer>
  );
}

export default function App() {
  return (
    <div className="relative flex h-screen w-full flex-col overflow-hidden bg-[#cdd3df] font-['Open_Sans',sans-serif] text-[7px] leading-[10px] text-[#222]">
      <header className="flex h-5 shrink-0 items-center gap-1 border-t border-[#7890a8] bg-[#0078d7] pl-[5px] pr-2.5 text-[#7fc0f4]">
        <Icon name="appLogo" className="size-3" />
        <h1 className="flex-1">RFEM 5.25.01 x64 - [Test123*]</h1>
        <div className="flex gap-[22px]">
          {["M1 4h6", "M1 1h6v6H1z", "M1 1l6 6M7 1L1 7"].map((d, i) => (
            <button key={d} aria-label={["Minimieren", "Maximieren", "Schließen"][i]}>
              <svg viewBox="0 0 8 8" className="size-[7px]" fill="none">
                <path d={d} stroke="currentColor" />
              </svg>
            </button>
          ))}
        </div>
      </header>
      <nav className="flex h-4 shrink-0 items-center gap-[9px] pl-[3px] text-slate-600">
        <span className="-mr-1 flex items-center gap-px">
          <span className="h-2.5 w-[3px] border-l-2 border-dotted border-slate-400" />
          <Icon name="logo" className="size-3" />
        </span>
        {menu.map(([before, key, after]) => (
          <button key={before + key + after}>
            {before}
            <u>{key}</u>
            {after}
          </button>
        ))}
        <div className="ml-auto flex gap-1 pr-1.5">
          {["M1 7h6", "M1 3h5v4H1zM3 3V1h5v4H6", "M1 1l6 6M7 1L1 7"].map((d, i) => (
            <button key={d} aria-label={["Fenster minimieren", "Fenster wiederherstellen", "Fenster schließen"][i]}>
              <svg viewBox="0 0 8 8" className="size-1.5" fill="none">
                <path d={d} stroke="currentColor" />
              </svg>
            </button>
          ))}
        </div>
      </nav>
      <div className={barClass}>
        <ToolItems items={barFileLeft} />
        <div className="flex h-3 w-[137px] shrink-0 items-center bg-white pl-0.5">
          <select aria-label="Lastfall" className="flex-1 appearance-none bg-transparent text-black outline-none">
            <option>LF1 - Eigengewicht</option>
          </select>
          <span className="flex h-full w-2.5 items-center justify-center bg-[#dfe3ec]">
            <span className="border-x-2 border-t-2 border-x-transparent border-t-slate-600" />
          </span>
        </div>
        <ToolItems items={barFileRight} />
      </div>
      <div className={barClass}>
        <ToolItems items={barModel} />
      </div>
      <div className="mt-px flex min-h-0 flex-1 gap-1">
        <Navigator />
        <main className="mr-0.5 flex min-w-0 flex-1 flex-col">
          <ModelView />
          <div className="h-1 shrink-0 border-t border-[#eef0f4]" />
          <TablePanel />
        </main>
      </div>
      <StatusBar />
      <EditMemberDialog />
      {/* callout from the auxiliary node field to the node in the model */}
      <svg viewBox="0 0 760 570" className="pointer-events-none absolute left-0 top-0 h-[570px] w-[760px]" fill="none">
        <rect x="366.5" y="294.5" width="161" height="49" stroke="#f00" strokeWidth="3" />
        <path d="M412 294L297 163" stroke="#f00" strokeWidth="3" />
        <path d="M289 153l13.500 6.500-9 7.500z" fill="#f00" />
      </svg>
    </div>
  );
}
